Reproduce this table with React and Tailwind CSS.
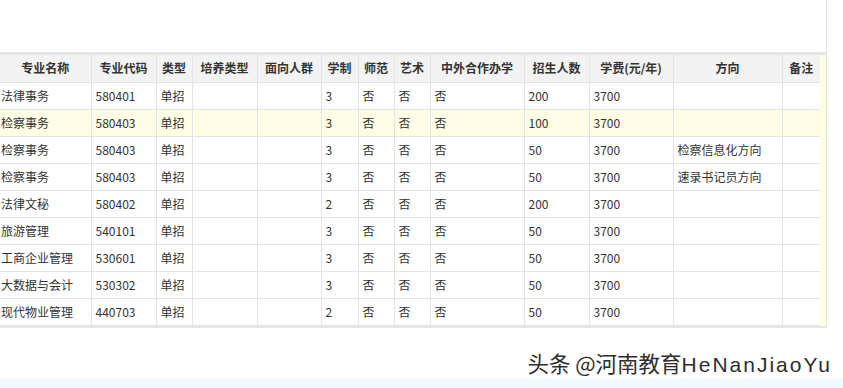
const cols = [
  { name: "专业名称", w: 91 },
  { name: "专业代码", w: 65 },
  { name: "类型", w: 36 },
  { name: "培养类型", w: 65 },
  { name: "面向人群", w: 64 },
  { name: "学制", w: 37 },
  { name: "师范", w: 36 },
  { name: "艺术", w: 36 },
  { name: "中外合作办学", w: 94 },
  { name: "招生人数", w: 65 },
  { name: "学费(元/年)", w: 84 },
  { name: "方向", w: 109 },
  { name: "备注", w: 38 },
];

const rows = [
  ["法律事务", "580401", "单招", "", "", "3", "否", "否", "否", "200", "3700", "", ""],
  ["检察事务", "580403", "单招", "", "", "3", "否", "否", "否", "100", "3700", "", ""],
  ["检察事务", "580403", "单招", "", "", "3", "否", "否", "否", "50", "3700", "检察信息化方向", ""],
  ["检察事务", "580403", "单招", "", "", "3", "否", "否", "否", "50", "3700", "速录书记员方向", ""],
  ["法律文秘", "580402", "单招", "", "", "2", "否", "否", "否", "200", "3700", "", ""],
  ["旅游管理", "540101", "单招", "", "", "3", "否", "否", "否", "50", "3700", "", ""],
  ["工商企业管理", "530601", "单招", "", "", "3", "否", "否", "否", "50", "3700", "", ""],
  ["大数据与会计", "530302", "单招", "", "", "3", "否", "否", "否", "50", "3700", "", ""],
  ["现代物业管理", "440703", "单招", "", "", "2", "否", "否", "否", "50", "3700", "", ""],
];

export default function App() {
  return (
    <div className="w-[843px] h-[388px] bg-white overflow-hidden flex flex-col font-['Noto_Sans_CJK_SC',sans-serif] text-[12px] text-[#333]">
      {/* top blank panel */}
      <div className="w-[827px] h-[52px] border-r border-[#e3e3e3] shrink-0" />
      <div className="w-[827px] h-[3px] bg-[#e6e6e6] shrink-0" />

      {/* grid */}
      <div className="flex w-[827px] shrink-0">
        <table className="border-collapse table-fixed w-[820px]">
          <colgroup>
            {cols.map((c) => (
              <col key={c.name} style={{ width: c.w }} />
            ))}
          </colgroup>
          <thead>
            <tr className="h-[27px] bg-[#f3f3f3]">
              {cols.map((c, i) => (
                <th
                  key={c.name}
                  className={`font-bold text-center whitespace-nowrap p-0 leading-none border-b border-[#e3e3e3] ${i === 0 ? "border-r" : i === cols.length - 1 ? "border-l" : "border-x"} border-[#e3e3e3]`}
                >
                  {c.name}
                </th>
              ))}
            </tr>
          </thead>
          <tbody>
            {rows.map((r, ri) => (
              <tr key={ri} className={`h-[27px] ${ri === 1 ? "bg-[#fffde6]" : "bg-white"}`}>
                {r.map((v, ci) => (
                  <td
                    key={ci}
                    className={`whitespace-nowrap leading-none py-0 border-b border-[#e3e3e3] ${ci === 0 ? "pl-[1px] pr-0 border-r" : ci === cols.length - 1 ? "px-[4px] border-l" : "px-[4px] border-x"} border-[#e3e3e3]`}
                  >
                    {v}
                  </td>
                ))}
              </tr>
            ))}
          </tbody>
        </table>
        <div className="w-[6px] bg-[#fffee2]" />
        <div className="w-[1px] bg-[#e3e3e3]" />
      </div>
      <div className="w-[827px] h-[2px] bg-[#e6e6e6] shrink-0" />

      {/* watermark */}
      <div className="flex-1 flex justify-end items-start pt-[24px] pr-[11px]">
        <span className="leading-none text-[#2d2d2d] whitespace-nowrap [text-shadow:0_0_2px_#fff]">
          <span className="text-[21.5px] font-['Noto_Sans_CJK_SC',sans-serif]">头条 @河南教育</span>
          <span className="text-[21px] tracking-[2px] font-['Liberation_Sans','Noto_Sans_CJK_SC',sans-serif]">HeNanJiaoYu</span>
        </span>
      </div>
      <div className="h-[9px] bg-[#f0f9ff] shrink-0" />
    </div>
  );
}
